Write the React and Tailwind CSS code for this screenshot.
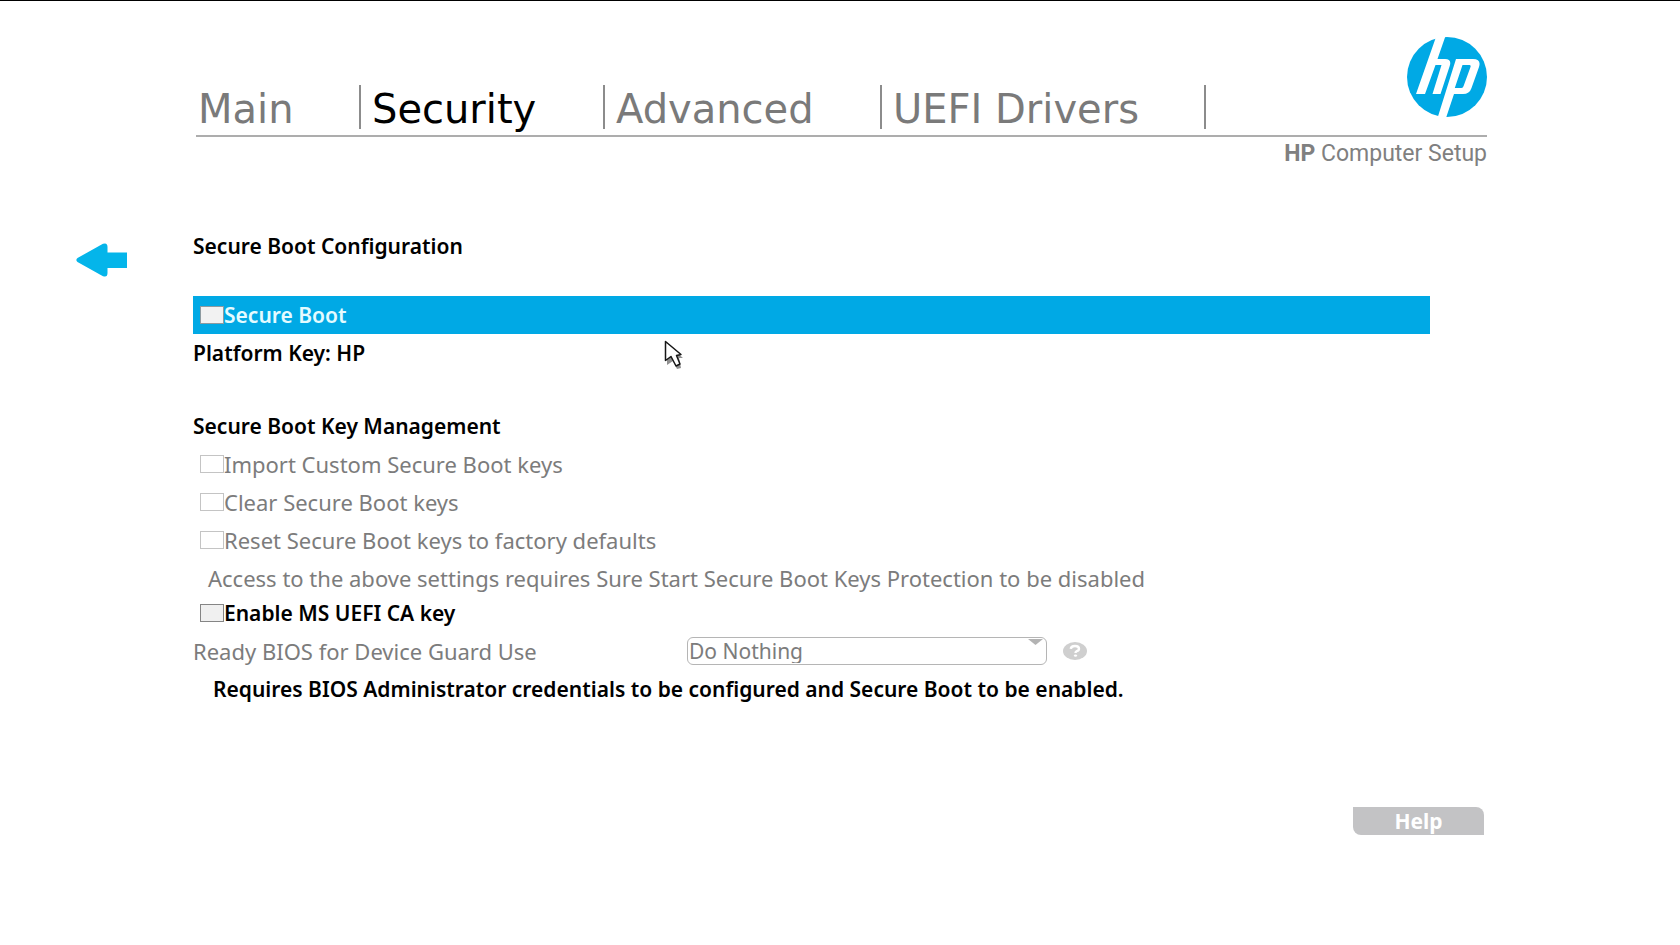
import React from "react";

const tabs = [
  { name: "Main", box: "w-[165px] pl-[2px]" },
  { name: "Security", box: "w-[244px] pl-[11px]", active: true },
  { name: "Advanced", box: "w-[277px] pl-[11px]" },
  { name: "UEFI Drivers", box: "w-[324px] pl-[11px]" },
];

function HpLogo() {
  return (
    <svg className="size-20 shrink-0" viewBox="0 0 80 80" role="img" aria-label="HP">
      <circle cx="40" cy="40" r="40" fill="#00a9e5" />
      <g fill="#fff">
        <path d="M29 0 L38.500 -1 L30.500 22 H38 Q45 22 42.700 29 L33.500 57 H25.500 L34.500 28 H28.500 L18 57 H9 Z" />
        <path
          fillRule="evenodd"
          d="M49 22 H66 Q74.500 22 72 30 L64.500 51 Q62.500 57 56 57 H47 L39 81 L30.500 81 Z M55.500 28 L47.800 51 H54.500 Q56 51 56.600 49 L63.500 30 Q64 28 62.500 28 Z"
        />
      </g>
    </svg>
  );
}

function CheckRow({ id, label, disabled = false, selected = false }) {
  const tone = disabled ? "text-[22px] font-normal text-[#7c7c7c]" : selected ? "bg-[#00a9e5] text-[#e4fbff]" : "text-black";
  const box = disabled ? "border-[#c4c4c4] bg-white" : selected ? "border-[#8d9aa0] bg-[#f2f2f2]" : "border-[#858585] bg-[#f0f0f0]";
  return (
    <div className={`flex h-[38px] items-center pl-[7px] ${tone}`}>
      <input id={id} type="checkbox" disabled={disabled} className={`h-[18px] w-6 shrink-0 appearance-none border ${box}`} />
      <label htmlFor={id}>{label}</label>
    </div>
  );
}

export default function App() {
  return (
    <div className="relative min-h-screen border-t border-black bg-white font-['Noto_Sans',sans-serif] text-[21px] leading-6 font-semibold text-black">
      <header className="ml-[196px] mr-[193px] pt-9">
        <div className="flex justify-between border-b-2 border-[#adadad] pb-[18px]">
          <nav className="flex items-end pt-12 -mb-3">
            {tabs.map((t) => (
              <a
                key={t.name}
                href="#"
                className={`flex h-11 items-center border-r-2 border-[#8c8c8c] pt-1 font-['DejaVu_Sans',sans-serif] text-[40px] font-normal whitespace-nowrap ${t.box} ${t.active ? "text-black" : "text-[#7a7a7a]"}`}
              >
                {t.name}
              </a>
            ))}
          </nav>
          <HpLogo />
        </div>
        <p className="pt-[5px] text-right font-['Roboto',sans-serif] text-[23px] font-normal text-[#808080]">
          <b className="font-bold">HP</b> Computer Setup
        </p>
      </header>

      <main className="flex pt-[61px]">
        <div className="w-[193px] shrink-0 pt-4 pl-[76px]">
          <button type="button" aria-label="Back" className="block">
            <svg className="h-[34px] w-[51px]" viewBox="0 0 51 34">
              <path d="M1.500 15 L27 .8 Q31.500 -.8 31.500 4 V9.500 H51 V25 H31.500 V30 Q31.500 34.800 27 33.200 L1.500 19 Q-.8 17 1.500 15Z" fill="#04b5ea" />
            </svg>
          </button>
        </div>
        <div className="mr-[250px] grow">
          <h1 className="flex h-[38px] items-center">Secure Boot Configuration</h1>
          <div className="pt-[31px]">
            <CheckRow id="secure-boot" label="Secure Boot" selected />
            <p className="flex h-[38px] items-center">Platform Key: HP</p>
          </div>
          <h2 className="mt-[35px] flex h-[38px] items-center">Secure Boot Key Management</h2>
          <CheckRow id="import-keys" label="Import Custom Secure Boot keys" disabled />
          <CheckRow id="clear-keys" label="Clear Secure Boot keys" disabled />
          <CheckRow id="reset-keys" label="Reset Secure Boot keys to factory defaults" disabled />
          <p className="flex h-[38px] items-center pl-[15px] text-[22px] font-normal text-[#7c7c7c]">
            Access to the above settings requires Sure Start Secure Boot Keys Protection to be disabled
          </p>
          <div className="-mt-[3px]">
            <CheckRow id="ms-uefi" label="Enable MS UEFI CA key" />
          </div>
          <div className="flex h-[38px] items-center text-[22px] font-normal text-[#7c7c7c]">
            <label htmlFor="device-guard" className="w-[494px]">Ready BIOS for Device Guard Use</label>
            <div className="relative">
              <select id="device-guard" disabled className="block h-7 w-[360px] appearance-none rounded-md border border-[#b5b5b5] bg-white pl-px text-[21px] leading-6">
                <option>Do Nothing</option>
              </select>
              <svg className="absolute top-[2px] right-1 h-[6px] w-[15px]" viewBox="0 0 15 6">
                <path d="M0 0H15L7.500 6Z" fill="#b3b3b3" />
              </svg>
            </div>
            <button type="button" aria-label="About Device Guard" className="ml-4">
              <svg className="h-[18px] w-6" viewBox="0 0 24 18">
                <ellipse cx="12" cy="9" rx="12" ry="9" fill="#cfcfcf" />
                <path d="M7.800 6.800Q8 4 12 4T16 6.800Q16 8.500 13.800 9.200Q12.500 9.700 12.500 11" fill="none" stroke="#fff" strokeWidth="2.400" />
                <ellipse cx="12.500" cy="13.600" rx="1.600" ry="1.200" fill="#fff" />
              </svg>
            </button>
          </div>
          <p className="flex h-[38px] items-center pl-5">
            Requires BIOS Administrator credentials to be configured and Secure Boot to be enabled.
          </p>
        </div>
      </main>

      <footer className="flex justify-end pt-[99px] pr-[196px] pb-10">
        <button type="button" className="h-7 w-[131px] rounded-tr-lg rounded-bl-lg bg-[#c3c3c5] font-bold text-white">Help</button>
      </footer>

      <svg className="pointer-events-none absolute top-[339px] left-[664px] h-[32px] w-[22px]" viewBox="0 0 22 32">
        <path d="M3 4V25L9 21L13 29L17 28L15 18H19Z" fill="#8f8f8f" />
        <path d="M1.500 1.500V20.500L7 16.500L12 26L16 24L12.500 15.500L17 14.500Z" fill="#fff" stroke="#161616" strokeWidth="1.500" strokeLinejoin="round" />
      </svg>
    </div>
  );
}
